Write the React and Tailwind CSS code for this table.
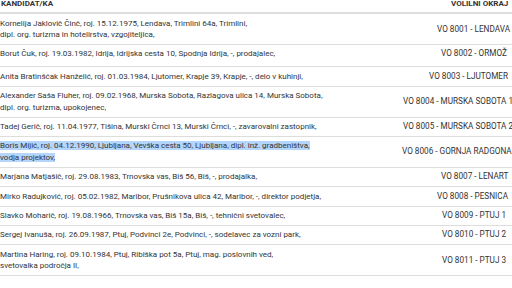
import React from "react";

const rows = [
  ["Kornelija Jaklovič Činč, roj. 15.12.1975, Lendava, Trimlini 64a, Trimlini,", "dipl. org. turizma in hotelirstva, vzgojiteljica,", "VO 8001 - LENDAVA", false, "", "pl-[36px]"],
  ["Borut Čuk, roj. 19.03.1982, Idrija, Idrijska cesta 10, Spodnja Idrija, -, prodajalec,", null, "VO 8002 - ORMOŽ", false, "pt-[3.2px] pb-[6.5px]", "pl-[40px]"],
  ["Anita Bratinšćak Hanželić, roj. 01.03.1984, Ljutomer, Krapje 39, Krapje, -, delo v kuhinji,", null, "VO 8003 - LJUTOMER", false, "", "pl-[28px]"],
  ["Alexander Saša Fluher, roj. 09.02.1968, Murska Sobota, Razlagova ulica 14, Murska Sobota,", "dipl. org. turizma, upokojenec,", "VO 8004 - MURSKA SOBOTA 1", false, "", "pl-[2px]"],
  ["Tadej Gerič, roj. 11.04.1977, Tišina, Murski Črnci 13, Murski Črnci, -, zavarovalni zastopnik,", null, "VO 8005 - MURSKA SOBOTA 2", false, "", "pl-[2px]"],
  ["Boris Mijić, roj. 04.12.1990, Ljubljana, Vevška cesta 50, Ljubljana, dipl. inž. gradbeništva,", "vodja projektov,", "VO 8006 - GORNJA RADGONA", true, "", "pl-[1px]"],
  ["Marjana Matjašič, roj. 29.08.1983, Trnovska vas, Biš 56, Biš, -, prodajalka,", null, "VO 8007 - LENART", false, "", "pl-[40px]"],
  ["Mirko Radujković, roj. 05.02.1982, Maribor, Prušnikova ulica 42, Maribor, -, direktor podjetja,", null, "VO 8008 - PESNICA", false, "", "pl-[36px]"],
  ["Slavko Moharič, roj. 19.08.1966, Trnovska vas, Biš 15a, Biš, -, tehnični svetovalec,", null, "VO 8009 - PTUJ 1", false, "", "pl-[41px]"],
  ["Sergej Ivanuša, roj. 26.09.1987, Ptuj, Podvinci 2e, Podvinci, -, sodelavec za vozni park,", null, "VO 8010 - PTUJ 2", false, "", "pl-[41px]"],
  ["Martina Haring, roj. 09.10.1984, Ptuj, Ribiška pot 5a, Ptuj, mag. poslovnih ved,", "svetovalka področja II,", "VO 8011 - PTUJ 3", false, "", "pl-[41px]"],
];

export default function App() {
  return (
    <div className="w-[512px] h-[288px] overflow-hidden bg-white text-[#333] text-[8px] leading-[11.4px] font-['Roboto',sans-serif]">
      <div className="w-[550px] mt-[-6px]">
        <div className="flex items-center border-b-2 border-[#ddd] py-[3.5px] font-bold">
          <div className="w-[401px] pl-[1px]">KANDIDAT/KA</div>
          <div className="flex-1 pl-[50px]">VOLILNI OKRAJ</div>
        </div>
        {rows.map((r, i) => (
          <div key={i} className={`flex items-center border-b border-[#ddd] ${r[4] ? r[4] : "py-[3.5px]"}`}>
            <div className="w-[401px]">
              {r[3] ? (
                <>
                  <span className="bg-[#b4d5fc]">{r[0]}</span>
                  <br />
                  <span className="bg-[#b4d5fc]">{r[1]}</span>
                </>
              ) : (
                <>
                  {r[0]}
                  {r[1] && (
                    <>
                      <br />
                      {r[1]}
                    </>
                  )}
                </>
              )}
            </div>
            <div className={`flex-1 text-[8.2px] whitespace-nowrap ${r[5]}`}>{r[2]}</div>
          </div>
        ))}
      </div>
    </div>
  );
}
